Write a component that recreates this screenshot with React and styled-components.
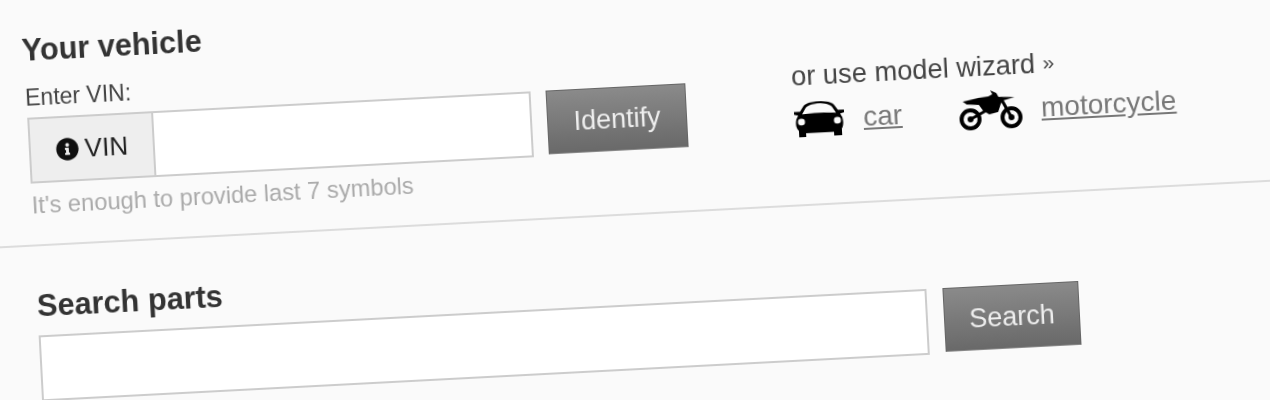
import React from 'react';
import styled, { createGlobalStyle } from 'styled-components';
import { FaInfoCircle } from 'react-icons/fa';

const GlobalStyle = createGlobalStyle`
  html, body {
    margin: 0;
    height: 400px;
    overflow: hidden;
    background: #fafafa;
  }
`;

const Page = styled.div`
  width: 1340px;
  transform-origin: 0 0;
  transform: rotate(-3deg);
  filter: blur(0.6px);
  font-family: "Liberation Sans", Arial, sans-serif;
  color: #333;
`;

const VehicleSection = styled.section`
  display: flex;
  height: 248px;
  box-sizing: border-box;
  margin-left: -60px;
  padding: 35px 0 0 81px;
  border-bottom: 2px solid #dcdcdc;
`;

const SearchSection = styled.section`
  margin-left: -60px;
  padding: 43px 0 0 81px;
`;

const LeftColumn = styled.div`
  width: 765px;
`;

const Heading = styled.h2`
  margin: 0 0 ${(props) => props.$bottom}px ${(props) => props.$left}px;
  font-size: 30.7px;
  line-height: 34px;
  font-weight: bold;
  color: #333;
`;

const FieldLabel = styled.label`
  display: block;
  margin: 16px 0 6px -1px;
  font-size: 23px;
  line-height: 28px;
  color: #444;
`;

const Row = styled.div`
  display: flex;
  gap: ${(props) => props.$gap}px;
`;

const InputGroup = styled.div`
  display: flex;
  width: ${(props) => props.$width}px;
  height: 66px;
  box-sizing: border-box;
  border: 2px solid #ccc;
  background: #fff;
`;

const Addon = styled.div`
  display: flex;
  align-items: center;
  justify-content: center;
  gap: 6px;
  width: 124px;
  box-sizing: border-box;
  border-right: 2px solid #ccc;
  background: #eee;
  font-size: 26px;
  color: #222;
  svg {
    color: #111;
    font-size: 23px;
  }
`;

const Button = styled.button`
  width: ${(props) => props.$width}px;
  height: 64px;
  padding: 0;
  border: 1px solid #666;
  border-bottom-color: #8a8a8a;
  background: linear-gradient(#8a8a8a, #696969);
  color: #eee;
  font-family: inherit;
  font-size: 27px;
`;

const Hint = styled.p`
  margin: 8px 0 0 0;
  font-size: 23.7px;
  line-height: 28px;
  color: #aaa;
`;

const Wizard = styled.div`
  padding-top: 67px;
`;

const WizardTitle = styled.div`
  font-size: 27.3px;
  line-height: 32px;
  color: #444;
`;

const Chevron = styled.span`
  position: relative;
  top: -3px;
  font-size: 21px;
`;

const WizardLinks = styled.div`
  display: flex;
  align-items: center;
  margin-top: 6px;
`;

const WizardLink = styled.a`
  display: flex;
  align-items: center;
  gap: ${(props) => props.$gap}px;
  width: ${(props) => props.$width}px;
  font-size: 28px;
  color: #777;
  span {
    text-decoration: underline;
  }
`;

const CarIcon = () => (
  <svg width="52" height="36" viewBox="0 0 52 38" preserveAspectRatio="none">
    <path
      fill="#000"
      fillRule="evenodd"
      d="M5 37V30C2 27 2 22 3 18L5 14L1 13V10H7L11 4C14 1 20 0 26 0S38 1 41 4L45 10H51V13L47 14L49 18C50 22 50 27 48 30V37H40V33H12V37ZM9 13C18 12 34 12 43 13L39 6C36 3 30 2 26 2S16 3 13 6ZM8 17.5A3.5 3.5 0 1 0 8 24.5A3.5 3.5 0 1 0 8 17.5ZM44 17.5A3.5 3.5 0 1 0 44 24.5A3.5 3.5 0 1 0 44 17.5Z"
    />
  </svg>
);

const BikeIcon = () => (
  <svg width="64" height="40" viewBox="0 0 64 40">
    <g fill="none" stroke="#000">
      <circle cx="11" cy="28" r="9" strokeWidth="4" />
      <circle cx="52" cy="28" r="9" strokeWidth="4" />
      <path d="M11 28L27 20M52 28L42 8" strokeWidth="3" />
    </g>
    <circle cx="11" cy="28" r="3" />
    <circle cx="52" cy="28" r="3" />
    <path d="M4 10L20 7L30 6L34 4L32 0L38 3L40 7L56 8L44 11L42 14L39 22L30 24L24 20L20 14L8 13Z" />
  </svg>
);

const App = () => {
  return (
    <Page>
      <GlobalStyle />
      <VehicleSection>
        <LeftColumn>
          <Heading $left={-2} $bottom={0}>Your vehicle</Heading>
          <FieldLabel>Enter VIN:</FieldLabel>
          <Row $gap={15}>
            <InputGroup $width={504}>
              <Addon>
                <FaInfoCircle />
                VIN
              </Addon>
            </InputGroup>
            <Button $width={140}>Identify</Button>
          </Row>
          <Hint>It's enough to provide last 7 symbols</Hint>
        </LeftColumn>
        <Wizard>
          <WizardTitle>or use model wizard <Chevron>»</Chevron></WizardTitle>
          <WizardLinks>
            <WizardLink $width={166} $gap={18}>
              <CarIcon />
              <span>car</span>
            </WizardLink>
            <WizardLink $gap={18}>
              <BikeIcon />
              <span>motorcycle</span>
            </WizardLink>
          </WizardLinks>
        </Wizard>
      </VehicleSection>
      <SearchSection>
        <Heading $left={0} $bottom={12}>Search parts</Heading>
        <Row $gap={16}>
          <InputGroup $width={889} />
          <Button $width={136}>Search</Button>
        </Row>
      </SearchSection>
    </Page>
  );
};

export default App;
